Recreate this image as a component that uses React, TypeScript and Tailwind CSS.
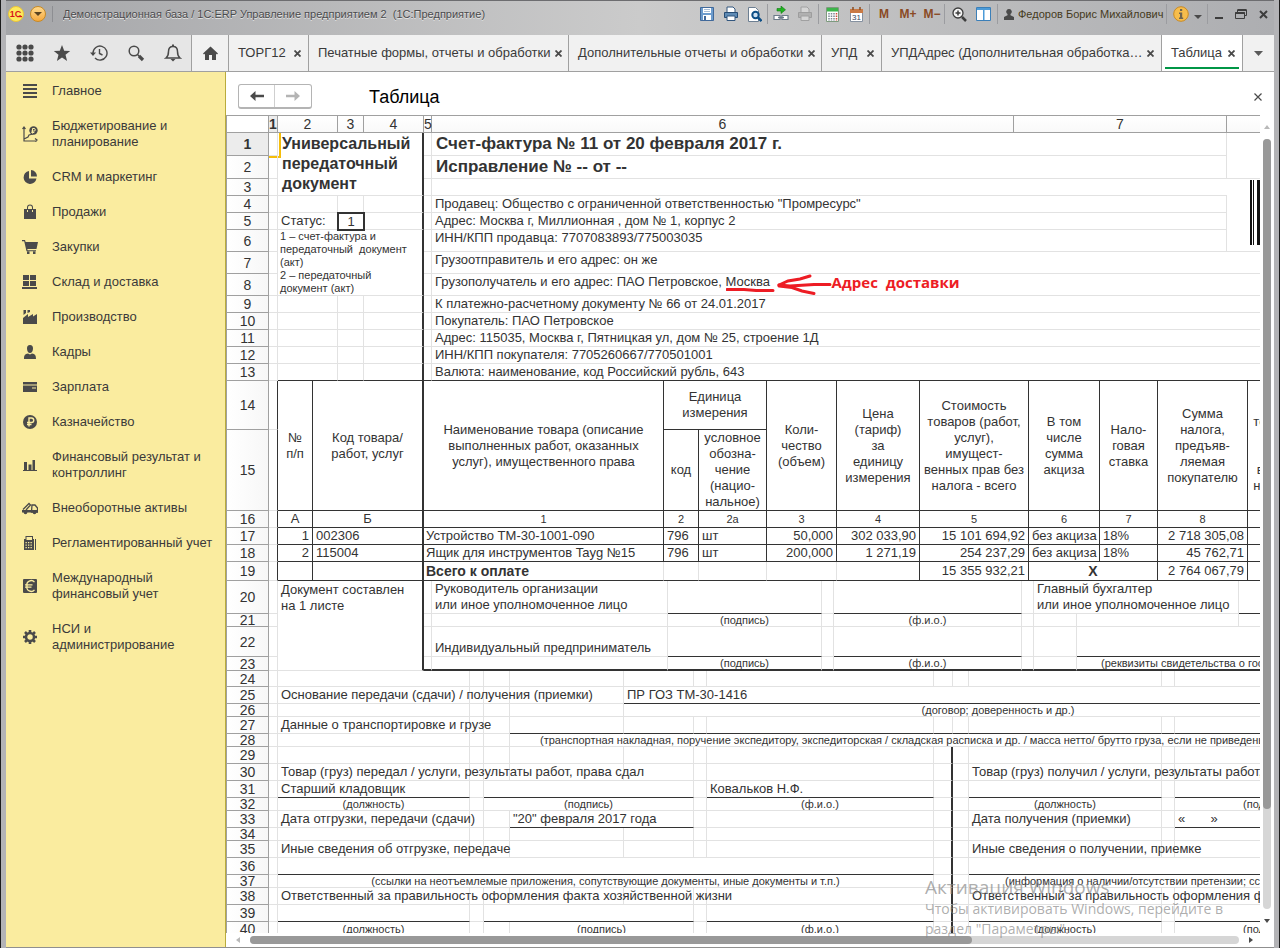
import type { ReactNode } from "react";
import { clsx } from "clsx";

const RIGHT = {
  none: "",
  light: "border-r border-r-[#e2e2e2]",
  dark: "border-r border-r-[#333333]",
  thick: "border-r-2 border-r-[#333333]",
};

const BOTTOM = {
  none: "",
  light: "border-b border-b-[#e2e2e2]",
  dark: "border-b border-b-[#333333]",
  thick: "border-b-2 border-b-[#333333]",
};

type CellProps = {
  span?: number;
  rows?: number;
  r?: keyof typeof RIGHT;
  b?: keyof typeof BOTTOM;
  className?: string;
  children?: ReactNode;
};

const Cell = ({ span, rows, r = "light", b = "light", className, children }: CellProps) => (
  <td colSpan={span} rowSpan={rows} className={clsx(RIGHT[r], BOTTOM[b], className)}>
    {children}
  </td>
);

const Blank = ({ count, ...rest }: { count: number } & CellProps) => (
  <>
    {Array.from({ length: count }, (_, i) => (
      <Cell key={i} {...rest} />
    ))}
  </>
);

type RowProps = { n: number; h: string; edge?: keyof typeof RIGHT; children: ReactNode };

const Row = ({ n, h, edge = "light", children }: RowProps) => (
  <tr className={h}>
    <th
      scope="row"
      className={clsx(
        "border-x border-b border-[#a0a0a0] text-center text-sm leading-3",
        n === 1 ? "bg-[#ececec] font-bold" : "bg-linear-to-r from-white to-[#f7f7f7] font-normal"
      )}
    >
      {n}
    </th>
    <td className={clsx("relative", RIGHT[edge], BOTTOM.light)}>
      {n === 1 && (
        <span className="absolute top-0 left-0 h-[25px] w-3 border-r-2 border-b-2 border-[#f5bd0a]" />
      )}
    </td>
    {children}
  </tr>
);

const Section = ({ label, cols, head, children }: { label: string; cols: string[]; head?: ReactNode; children: ReactNode }) => (
  <table aria-label={label} className="w-full min-w-[1146px] table-fixed border-separate border-spacing-0">
    <colgroup>
      {cols.map((w, i) => (
        <col key={i} className={w} />
      ))}
      <col />
    </colgroup>
    {head}
    <tbody>{children}</tbody>
  </table>
);

const SMALL = "text-center text-[11px] leading-3 whitespace-nowrap";
const TEXT = "pl-[3px] whitespace-nowrap";
const HEAD = "text-center";
const NUM = "pr-[3px] text-right whitespace-nowrap";

const COL_HEADS = ["1", "2", "3", "4", "5", "6", "7", ""];

const INVOICE_LINES = [
  { n: 9, text: "К платежно-расчетному документу № 66 от 24.01.2017" },
  { n: 10, text: "Покупатель: ПАО Петровское" },
  { n: 11, text: "Адрес: 115035, Москва г, Пятницкая ул, дом № 25, строение 1Д" },
  { n: 12, text: "ИНН/КПП покупателя: 7705260667/770501001" },
  { n: 13, text: "Валюта: наименование, код Российский рубль, 643" },
];

const GOODS = [
  { n: 17, no: "1", code: "002306", name: "Устройство ТМ-30-1001-090", qty: "50,000", price: "302 033,90", sum: "15 101 694,92", tax: "2 718 305,08" },
  { n: 18, no: "2", code: "115004", name: "Ящик для инструментов Tayg №15", qty: "200,000", price: "1 271,19", sum: "254 237,29", tax: "45 762,71" },
];

const InvoiceHeader = () => (
  <Section
    label="Реквизиты счета-фактуры"
    cols={["w-[43px]", "w-[9px]", "w-[60px]", "w-[26px]", "w-[60px]", "w-[8px]", "w-[582px]", "w-[213px]"]}
    head={
      <thead>
        <tr className="h-[17px]">
          <th className="border-x border-b border-[#a0a0a0]" />
          {COL_HEADS.map((c, i) => (
            <th
              key={i}
              scope="col"
              className={clsx(
                "border-r border-b border-[#a0a0a0] text-sm leading-4",
                i === 0 ? "bg-[#ececec] font-bold" : "bg-linear-to-b from-white to-[#f9f9f9] font-normal"
              )}
            >
              {c}
            </th>
          ))}
        </tr>
      </thead>
    }
  >
    <Row n={1} h="h-[23px]">
      <Cell span={3} rows={3} r="thick" className="pt-px pl-1 align-top text-base leading-5 font-bold">
        Универсальный передаточный документ
      </Cell>
      <Cell />
      <Cell span={2} className="pl-1 text-[17px] leading-5 font-bold">Счет-фактура № 11 от 20 февраля 2017 г.</Cell>
      <Cell rows={2} r="none" />
    </Row>
    <Row n={2} h="h-[23px]">
      <Cell />
      <Cell span={2} className="pl-1 text-[17px] leading-5 font-bold">Исправление № -- от --</Cell>
    </Row>
    <Row n={3} h="h-[17px]">
      <Cell />
      <Cell span={2} r="none" />
      <Cell rows={4} r="none" className="pl-[22px] align-top">
        <svg width="36" height="65" className="mt-px block" aria-label="Штрихкод" role="img">
          <path d="M1 0h2v65h-2zM4 0h1v65h-1zM8 0h4v65h-4zM14 0h1v65h-1zM17 0h3v65h-3zM23 0h1v65h-1zM26 0h2v65h-2zM31 0h3v65h-3z" fill="#111" />
        </svg>
      </Cell>
    </Row>
    <Row n={4} h="h-[17px]">
      <Blank count={2} />
      <Cell r="thick" />
      <Cell />
      <Cell span={2} className={TEXT}>Продавец: Общество с ограниченной ответственностью "Промресурс"</Cell>
    </Row>
    <Row n={5} h="h-[17px]">
      <Cell className={TEXT}>Статус:</Cell>
      <td className="text-center outline-2 -outline-offset-1 outline-[#333333]">1</td>
      <Cell r="thick" />
      <Cell />
      <Cell span={2} className={TEXT}>Адрес: Москва г, Миллионная , дом № 1, корпус 2</Cell>
    </Row>
    <Row n={6} h="h-[22px]">
      <Cell span={3} rows={3} r="thick" className="pl-0.5 align-top text-[11px] leading-[13px]">
        1 – счет-фактура и<br />
        передаточный&nbsp; документ<br />
        (акт)<br />
        2 – передаточный<br />
        документ (акт)
      </Cell>
      <Cell />
      <Cell span={2} className={clsx(TEXT, "align-top")}>ИНН/КПП продавца: 7707083893/775003035</Cell>
    </Row>
    <Row n={7} h="h-[22px]">
      <Cell />
      <Cell span={3} r="none" className={clsx(TEXT, "align-top")}>Грузоотправитель и его адрес: он же</Cell>
    </Row>
    <Row n={8} h="h-[22px]">
      <Cell />
      <Cell span={3} r="none" className={clsx(TEXT, "align-top")}>
        Грузополучатель и его адрес: ПАО Петровское,{" "}
        <span className="relative">
          Москва
          <span className="absolute -top-0.5 left-0 flex items-center">
            <svg width="106" height="24" viewBox="0 0 106 24" fill="none" stroke="#ed1c24" strokeWidth="3" strokeLinecap="round" className="shrink-0">
              <path d="M1 17.500 18 17.500 30 18.500 47 18.500" />
              <path d="M53 13 64 14 88 12.500 104 12.500" />
              <path d="M53 13 62 9 74 7 84 4" />
              <path d="M53 14 66 15.500 76 19 88 21.500" />
            </svg>
            <strong className="mb-1 font-['Open_Sans',sans-serif] text-[15px] leading-5 font-bold text-[#ed1c24]">
              Адрес&nbsp; доставки
            </strong>
          </span>
        </span>
      </Cell>
    </Row>
    {INVOICE_LINES.map(({ n, text }) => {
      const b = n === 13 ? "dark" : "light";
      return (
        <Row key={n} n={n} h="h-[17px]">
          <Blank count={2} b={b} />
          <Cell r="thick" b={b} />
          <Cell b={b} />
          <Cell span={3} r="none" b={b} className={TEXT}>{text}</Cell>
        </Row>
      );
    })}
  </Section>
);

const GoodsTable = () => (
  <Section
    label="Товары"
    cols={["w-[43px]", "w-[9px]", "w-[35px]", "w-[111px]", "w-[240px]", "w-[35px]", "w-[68px]", "w-[70px]", "w-[83px]", "w-[109px]", "w-[71px]", "w-[58px]", "w-[90px]", "w-[105px]"]}
  >
    <Row n={14} h="h-[49px]" edge="dark">
      <Cell rows={2} r="dark" b="dark" className={HEAD}>№<br />п/п</Cell>
      <Cell rows={2} r="thick" b="dark" className={HEAD}>Код товара/<br />работ, услуг</Cell>
      <Cell rows={2} r="dark" b="dark" className={HEAD}>
        Наименование товара (описание<br />выполненных работ, оказанных<br />услуг), имущественного права
      </Cell>
      <Cell span={2} r="dark" b="dark" className={HEAD}>Единица<br />измерения</Cell>
      <Cell rows={2} r="dark" b="dark" className={HEAD}>Коли-<br />чество<br />(объем)</Cell>
      <Cell rows={2} r="dark" b="dark" className={HEAD}>Цена<br />(тариф)<br />за<br />единицу<br />измерения</Cell>
      <Cell rows={2} r="dark" b="dark" className={clsx(HEAD, "whitespace-nowrap")}>
        Стоимость<br />товаров (работ,<br />услуг),<br />имущест-<br />венных прав без<br />налога - всего
      </Cell>
      <Cell rows={2} r="dark" b="dark" className={HEAD}>В том<br />числе<br />сумма<br />акциза</Cell>
      <Cell rows={2} r="dark" b="dark" className={HEAD}>Нало-<br />говая<br />ставка</Cell>
      <Cell rows={2} r="dark" b="dark" className={HEAD}>Сумма<br />налога,<br />предъяв-<br />ляемая<br />покупателю</Cell>
      <Cell rows={2} r="dark" b="dark" className={clsx(HEAD, "whitespace-nowrap")}>
        Стоимость<br />товаров (работ,<br />услуг),<br />имущест-<br />венных прав с<br />налогом - всего
      </Cell>
      <Cell rows={2} r="none" b="dark" />
    </Row>
    <Row n={15} h="h-[81px]" edge="dark">
      <Cell r="dark" b="dark" className={HEAD}>код</Cell>
      <Cell r="dark" b="dark" className={clsx(HEAD, "whitespace-nowrap")}>
        условное<br />обозна-<br />чение<br />(нацио-<br />нальное)
      </Cell>
    </Row>
    <Row n={16} h="h-[17px]" edge="dark">
      <Cell r="dark" b="dark" className="text-center">А</Cell>
      <Cell r="thick" b="dark" className="text-center">Б</Cell>
      {["1", "2", "2а", "3", "4", "5", "6", "7", "8", "9", ""].map((c, i) => (
        <Cell key={i} r="dark" b="dark" className="text-center text-[11px]">{c}</Cell>
      ))}
    </Row>
    {GOODS.map((g) => (
      <Row key={g.n} n={g.n} h="h-[17px]" edge="dark">
        <Cell r="dark" b="dark" className={NUM}>{g.no}</Cell>
        <Cell r="thick" b="dark" className={TEXT}>{g.code}</Cell>
        <Cell r="dark" b="dark" className="pl-0.5 whitespace-nowrap">{g.name}</Cell>
        <Cell r="dark" b="dark" className={TEXT}>796</Cell>
        <Cell r="dark" b="dark" className={TEXT}>шт</Cell>
        <Cell r="dark" b="dark" className={NUM}>{g.qty}</Cell>
        <Cell r="dark" b="dark" className={NUM}>{g.price}</Cell>
        <Cell r="dark" b="dark" className={NUM}>{g.sum}</Cell>
        <Cell r="dark" b="dark" className={TEXT}>без акциза</Cell>
        <Cell r="dark" b="dark" className={TEXT}>18%</Cell>
        <Cell r="dark" b="dark" className={NUM}>{g.tax}</Cell>
        <Blank count={2} r="dark" b="dark" />
      </Row>
    ))}
    <Row n={19} h="h-[19px]" edge="dark">
      <Cell r="dark" b="dark" />
      <Cell r="thick" b="dark" />
      <Cell b="dark" className="pl-0.5 text-sm leading-4 font-bold whitespace-nowrap">Всего к оплате</Cell>
      <Blank count={3} b="dark" />
      <Cell r="dark" b="dark" />
      <Cell r="dark" b="dark" className={NUM}>15 355 932,21</Cell>
      <Cell span={2} r="dark" b="dark" className="text-center text-sm leading-4 font-bold">Х</Cell>
      <Cell r="dark" b="dark" className={NUM}>2 764 067,79</Cell>
      <Blank count={2} r="dark" b="dark" />
    </Row>
  </Section>
);

const Signatures = () => (
  <Section
    label="Подписи"
    cols={["w-[43px]", "w-[9px]", "w-[146px]", "w-[8px]", "w-[236px]", "w-[154px]", "w-[12px]", "w-[188px]", "w-[12px]", "w-[43px]", "w-[162px]"]}
  >
    <Row n={20} h="h-[33px]">
      <Cell rows={4} r="thick" className={clsx(TEXT, "pt-px align-top")}>Документ составлен<br />на 1 листе</Cell>
      <Cell />
      <Cell className={TEXT}>Руководитель организации<br />или иное уполномоченное лицо</Cell>
      <Cell b="dark" />
      <Cell />
      <Cell b="dark" />
      <Cell />
      <Cell span={2} className={TEXT}>Главный бухгалтер<br />или иное уполномоченное лицо</Cell>
      <Cell r="none" b="dark" />
    </Row>
    <Row n={21} h="h-[13px]">
      <Blank count={2} />
      <Cell className={SMALL}>(подпись)</Cell>
      <Cell />
      <Cell className={SMALL}>(ф.и.о.)</Cell>
      <Blank count={3} />
      <Cell r="none" />
    </Row>
    <Row n={22} h="h-[30px]">
      <Cell />
      <Cell className={clsx(TEXT, "align-bottom")}>Индивидуальный предприниматель</Cell>
      <Cell b="dark" />
      <Cell />
      <Cell b="dark" />
      <Blank count={2} />
      <Cell span={2} r="none" b="dark" />
    </Row>
    <Row n={23} h="h-[14px]">
      <Blank count={2} b="thick" />
      <Cell b="thick" className={SMALL}>(подпись)</Cell>
      <Cell b="thick" />
      <Cell b="thick" className={SMALL}>(ф.и.о.)</Cell>
      <Blank count={2} b="thick" />
      <Cell span={2} r="none" b="thick" className="pl-6 text-[11px] leading-3 whitespace-nowrap">
        (реквизиты свидетельства о государственной
      </Cell>
    </Row>
  </Section>
);

/* grid cells shared by the rows that carry no signature lines */
const RightHalf = ({ text }: { text?: string }) => (
  <>
    <Cell />
    <Cell r="thick" />
    <Cell />
    <Cell className={TEXT}>{text}</Cell>
    <Cell />
    <Cell r="none" />
  </>
);

const Transfer = () => (
  <Section
    label="Передача и получение"
    cols={["w-[43px]", "w-[9px]", "w-[192px]", "w-[14px]", "w-[26px]", "w-[114px]", "w-[70px]", "w-[13px]", "w-[227px]", "w-[19px]", "w-[16px]", "w-[193px]", "w-[13px]"]}
  >
    <Row n={24} h="h-[16px]">
      <Blank count={11} />
      <Cell r="none" />
    </Row>
    <Row n={25} h="h-[17px]">
      <Cell className={TEXT}>Основание передачи (сдачи) / получения (приемки)</Cell>
      <Blank count={3} />
      <Cell span={8} r="none" b="dark" className={TEXT}>ПР ГОЗ ТМ-30-1416</Cell>
    </Row>
    <Row n={26} h="h-[13px]">
      <Blank count={4} />
      <Cell span={8} r="none" className={SMALL}>(договор; доверенность и др.)</Cell>
    </Row>
    <Row n={27} h="h-[17px]">
      <Cell className={TEXT}>Данные о транспортировке и грузе</Cell>
      <Blank count={2} />
      <Blank count={8} b="dark" />
      <Cell r="none" b="dark" />
    </Row>
    <Row n={28} h="h-[13px]">
      <Blank count={3} />
      <Cell span={9} r="none" className="pl-[30px] text-[11px] leading-3 whitespace-nowrap">
        (транспортная накладная, поручение экспедитору, экспедиторская / складская расписка и др. / масса нетто/ брутто груза, если не приведены ссылки
      </Cell>
    </Row>
    <Row n={29} h="h-[17px]">
      <Blank count={6} />
      <RightHalf />
    </Row>
    <Row n={30} h="h-[17px]">
      <Cell className={TEXT}>Товар (груз) передал / услуги, результаты работ, права сдал</Cell>
      <Blank count={5} />
      <RightHalf text="Товар (груз) получил / услуги, результаты работ, права получил" />
    </Row>
    <Row n={31} h="h-[17px]">
      <Cell b="dark" className={TEXT}>Старший кладовщик</Cell>
      <Cell />
      <Cell span={3} b="dark" />
      <Cell />
      <Cell b="dark" className={TEXT}>Ковальков Н.Ф.</Cell>
      <Cell r="thick" />
      <Cell />
      <Cell b="dark" />
      <Cell />
      <Cell r="none" b="dark" />
    </Row>
    <Row n={32} h="h-[13px]">
      <Cell className={SMALL}>(должность)</Cell>
      <Cell />
      <Cell span={3} className={SMALL}>(подпись)</Cell>
      <Cell />
      <Cell className={SMALL}>(ф.и.о.)</Cell>
      <Cell r="thick" />
      <Cell />
      <Cell className={SMALL}>(должность)</Cell>
      <Cell />
      <Cell r="none" className={clsx(SMALL, "pr-3")}>(подпись)</Cell>
    </Row>
    <Row n={33} h="h-[17px]">
      <Cell className={TEXT}>Дата отгрузки, передачи (сдачи)</Cell>
      <Blank count={2} />
      <Cell span={2} b="dark" className={TEXT}>"20" февраля 2017 года</Cell>
      <Blank count={2} />
      <Cell r="thick" />
      <Cell />
      <Cell className={TEXT}>Дата получения (приемки)</Cell>
      <Cell />
      <Cell r="none" b="dark" className={TEXT}>«&nbsp;&nbsp;&nbsp;&nbsp;&nbsp;&nbsp; »</Cell>
    </Row>
    <Row n={34} h="h-[13px]">
      <Blank count={6} />
      <RightHalf />
    </Row>
    <Row n={35} h="h-[17px]">
      <Cell className={TEXT}>Иные сведения об отгрузке, передаче</Cell>
      <Blank count={5} />
      <RightHalf text="Иные сведения о получении, приемке" />
    </Row>
    <Row n={36} h="h-[17px]">
      <Cell span={7} b="dark" />
      <Cell r="thick" />
      <Cell />
      <Cell span={3} r="none" b="dark" />
    </Row>
    <Row n={37} h="h-[13px]">
      <Cell span={7} className={SMALL}>(ссылки на неотъемлемые приложения, сопутствующие документы, иные документы и т.п.)</Cell>
      <Cell r="thick" />
      <Cell />
      <Cell span={3} r="none" className="pl-9 text-[11px] leading-3 whitespace-nowrap">
        (информация о наличии/отсутствии претензии; ссылки
      </Cell>
    </Row>
    <Row n={38} h="h-[17px]">
      <Cell className={TEXT}>Ответственный за правильность оформления факта хозяйственной жизни</Cell>
      <Blank count={5} />
      <RightHalf text="Ответственный за правильность оформления факта" />
    </Row>
    <Row n={39} h="h-[17px]">
      <Cell b="dark" />
      <Cell />
      <Cell span={3} b="dark" />
      <Cell />
      <Cell b="dark" />
      <Cell r="thick" />
      <Cell />
      <Cell b="dark" />
      <Cell />
      <Cell r="none" b="dark" />
    </Row>
    <Row n={40} h="h-[15px]">
      <Cell className={SMALL}>(должность)</Cell>
      <Blank count={2} />
      <Cell span={2} className={SMALL}>(подпись)</Cell>
      <Cell />
      <Cell className={SMALL}>(ф.и.о.)</Cell>
      <Cell r="thick" />
      <Cell />
      <Cell className={SMALL}>(должность)</Cell>
      <Cell />
      <Cell r="none" className={clsx(SMALL, "pr-3")}>(подпись)</Cell>
    </Row>
  </Section>
);

const MENU: { label: ReactNode; icon: ReactNode }[] = [
  { label: "Главное", icon: <path d="M1 1h14v2H1zM1 5h14v2H1zM1 9h14v2H1zM1 13h14v2H1z" /> },
  {
    label: <>Бюджетирование и<br />планирование</>,
    icon: (
      <>
        <path d="M2 1v14h13M0.500 3 2 1l1.500 2M13 12.500l2 1.500-2 1.500M2 13l4-2 1-2 4-1" fill="none" stroke="currentColor" strokeWidth="1.2" />
        <circle cx="11.500" cy="4.500" r="4.200" />
        <path d="M10.500 7.500v-5h1.500a1.300 1.300 0 0 1 0 2.600h-2.700M9.300 6.500h3" fill="none" stroke="#fbeda1" />
      </>
    ),
  },
  { label: "CRM и маркетинг", icon: <path d="M7 2a6.500 6.500 0 1 0 7.500 7.500H7zM9 1v6.500h6A6.500 6.500 0 0 0 9 1z" /> },
  { label: "Продажи", icon: <path d="M2 5h3V3.500a3 3 0 0 1 6 0V5h3v10H2zM6 5h4V3.500a2 2 0 0 0-4 0zM5 6v2h1V6zM10 6v2h1V6z" fillRule="evenodd" /> },
  { label: "Закупки", icon: <path d="M0 1h3l.6 2H16l-1.500 7H5.300l.3 1.200H14v1H4.500L2.200 2.200H0zM5 12.500h2.500V15H5zM11 12.500h2.500V15H11z" /> },
  { label: "Склад и доставка", icon: <path d="M1 1h6v5H1zM8 1h6v5H8zM1 7h6v5H1zM8 7h6v5H8zM0 13h15v2H0z" /> },
  { label: "Производство", icon: <path d="M1 15V9l5-4v3l5-3v2.500L15 5v10zM1.500 1H4v3L1.500 6zM5.500 1H8v2L5.500 4z" /> },
  { label: "Кадры", icon: <path d="M8 1c2.200 0 3 1.500 3 3.500C11 7 9.800 9 8 9S5 7 5 4.500C5 2.500 5.800 1 8 1zM2 15c0-4 1-5 4-5.500l2 1 2-1c3 .5 4 1.500 4 5.500z" /> },
  { label: "Зарплата", icon: <path d="M1 3h14v2.500H1zM1 6.500h14V13H1zM10 8.500v1h4v-1z" fillRule="evenodd" /> },
  {
    label: "Казначейство",
    icon: (
      <>
        <circle cx="8" cy="8" r="7" />
        <path d="M7 12.500V4h2.500a2.200 2.200 0 0 1 0 4.500H5M5 10.500h4.500" fill="none" stroke="#fbeda1" strokeWidth="1.4" />
      </>
    ),
  },
  { label: <>Финансовый результат и<br />контроллинг</>, icon: <path d="M2 5h3v8H2zM6.500 7.500h3V13h-3zM10.500 3h2.500v10h-2.500zM1 13h14v1H1z" /> },
  {
    label: "Внеоборотные активы",
    icon: (
      <>
        <path d="M1 9.500 7 3.500l1.500 1.500L4 10M10 5h3l2.500 3v4H9.500z" fill="none" stroke="currentColor" strokeWidth="1.3" />
        <path d="M0 10h16v2.500H0z" />
        <circle cx="3.500" cy="12.500" r="1.800" />
        <circle cx="12.500" cy="12.500" r="1.800" />
      </>
    ),
  },
  {
    label: "Регламентированный учет",
    icon: (
      <path
        d="M3.500 1H11v3h1v11H2V4h1.500zM4.500 2v3H10V2zM3.500 7v1.300h1.300V7zM6 7v1.300h1.300V7zM8.500 7v1.300h1.300V7zM3.500 9.500v1.300h1.300V9.500zM6 9.500v1.300h1.300V9.500zM8.500 9.500v1.300h1.300V9.500zM3.500 12v1.300h1.300V12zM6 12v1.300h1.300V12zM8.500 12v1.300h1.300V12zM13 4h1v11h-1z"
        fillRule="evenodd"
      />
    ),
  },
  {
    label: <>Международный<br />финансовый учет</>,
    icon: (
      <>
        <rect x="1" y="1" width="14" height="14" rx="1" />
        <path d="M12.500 4.200A4.300 4.300 0 0 0 5 8a4.300 4.300 0 0 0 7.500 3.800M3 6.800h7.500M3 9.200h6.500" fill="none" stroke="#fbeda1" strokeWidth="1.300" />
      </>
    ),
  },
  {
    label: <>НСИ и<br />администрирование</>,
    icon: (
      <>
        <circle cx="8" cy="8" r="4" fill="none" stroke="currentColor" strokeWidth="2.500" />
        <path d="M8 1v2.500M8 12.500V15M1 8h2.500M12.500 8H15M3 3l1.800 1.800M11.200 11.200 13 13M3 13l1.800-1.800M11.200 4.800 13 3" stroke="currentColor" strokeWidth="2.600" />
      </>
    ),
  },
];

const Sidebar = () => (
  <nav className="flex w-[220px] shrink-0 flex-col gap-[19px] border-r border-[#b9ab3c] bg-[#faec9f] pt-[11px] pl-4 text-[13px] leading-4">
    {MENU.map(({ label, icon }, i) => (
      <a key={i} href="#" className="flex items-center gap-[14px] text-[#3a3a3a]">
        <svg width="16" height="16" viewBox="0 0 16 16" fill="currentColor" className="shrink-0 text-[#4a4a4a]">
          {icon}
        </svg>
        <span className="whitespace-nowrap">{label}</span>
      </a>
    ))}
  </nav>
);

const Group = ({ children, className }: { children: ReactNode; className?: string }) => (
  <div className={clsx("flex h-5 items-center border-l border-[#9b9ca0]", className)}>{children}</div>
);

const BarButton = ({ label, children, className }: { label: string; children: ReactNode; className?: string }) => (
  <button type="button" aria-label={label} className={clsx("flex h-5 items-center justify-center", className ?? "w-6")}>
    {children}
  </button>
);

const Printer = () => (
  <svg width="16" height="16" viewBox="0 0 16 16">
    <path d="M4 1h6l2 2v4H4z" fill="#fff" stroke="#33577f" />
    <path d="M1.500 6.500h13v5h-13z" fill="#5f8bb5" stroke="#274c74" />
    <path d="M4 10h8v4.500H4z" fill="#fff" stroke="#33577f" />
  </svg>
);

const TitleBar = () => (
  <header className="flex h-[35px] items-center border-t border-[#6d6d70] bg-linear-to-r from-[#a5a6a9] via-[#cbcbcb] to-[#adaeb1] pb-2 pl-0.5">
    <svg width="16" height="16" viewBox="0 0 16 16" className="shrink-0">
      <circle cx="8" cy="8" r="7.500" fill="#fdea5c" stroke="#e9c43a" />
      <text x="7.500" y="11" textAnchor="middle" fontSize="9" fontWeight="bold" fontFamily="Liberation Sans, sans-serif" fill="#d8131b">1С</text>
      <path d="M9 10.600h5" stroke="#d8131b" strokeWidth="1.200" />
    </svg>
    <button type="button" aria-label="Главное меню" className="ml-1.5 flex size-4 items-center justify-center rounded-full border border-[#c98a24] bg-linear-to-b from-[#ffd98a] to-[#f5a93c]">
      <svg width="8" height="4" viewBox="0 0 8 4"><path d="M0 0h8L4 4z" fill="#5a4320" /></svg>
    </button>
    <div className="ml-1.5 h-4 border-l border-[#8d8e92]" />
    <div className="ml-2.5 flex-1 truncate text-[11px] text-[#4b4b4d] [text-shadow:0_1px_0_#e4e4e4]">
      Демонстрационная база / 1С:ERP Управление предприятием 2 &nbsp;(1С:Предприятие)
    </div>

    <div className="flex">
      <BarButton label="Сохранить">
        <svg width="14" height="14" viewBox="0 0 14 14">
          <path d="M.5.500h13v13H.5z" fill="#6d9ccd" stroke="#41699a" />
          <path d="M3 1h8v5H3zM3 8h8v5H3z" fill="#fff" />
          <path d="M4 2.500h6M4 4.500h6" stroke="#a9bfd8" />
          <path d="M4 9h2v4H4z" fill="#41699a" />
        </svg>
      </BarButton>
      <BarButton label="Печать"><Printer /></BarButton>
      <BarButton label="Просмотр">
        <svg width="14" height="15" viewBox="0 0 14 15">
          <path d="M.5.500h7l3 3v11H.5z" fill="#fff" stroke="#6d7f92" />
          <circle cx="7.500" cy="8" r="3.200" fill="#cfe2f2" stroke="#0d4f86" strokeWidth="2" />
          <path d="m10 10.500 3.500 3.500" stroke="#0d4f86" strokeWidth="2.500" />
        </svg>
      </BarButton>
    </div>
    <Group className="px-px">
      <BarButton label="Получить ссылку">
        <svg width="16" height="16" viewBox="0 0 16 16">
          <path d="M4 2.500h4V0l4.500 3.800L8 7.500V5H4z" fill="#22b422" stroke="#0e7a12" strokeWidth=".6" />
          <path d="M1 9.500h6v4H1zM9 9.500h6v4H9z" fill="#fff" stroke="#6c7b8a" strokeWidth="1.200" />
          <path d="M5 11.500h6" stroke="#6c7b8a" strokeWidth="1.500" />
        </svg>
      </BarButton>
      <BarButton label="Перейти по ссылке">
        <span className="opacity-30 grayscale"><Printer /></span>
      </BarButton>
    </Group>
    <Group className="px-px">
      <BarButton label="Калькулятор">
        <svg width="13" height="15" viewBox="0 0 13 15">
          <path d="M.5.500h12v14H.5z" fill="#fff" stroke="#7e9a7e" />
          <path d="M1 1h11v3.500H1z" fill="#3cb54a" />
          <path d="M3 6v8M5.500 6v8M8 6v8" stroke="#7b8894" strokeDasharray="1.500 1" strokeWidth="1.500" />
          <path d="M10.500 6v8" stroke="#d04a3a" strokeDasharray="1.500 1" strokeWidth="1.500" />
        </svg>
      </BarButton>
      <BarButton label="Календарь">
        <svg width="13" height="15" viewBox="0 0 13 15">
          <path d="M.5 2.500h12v12H.5z" fill="#fff" stroke="#8591a0" />
          <path d="M0 2h13v4H0z" fill="#c97a45" />
          <path d="M3 0v3M10 0v3" stroke="#8b4d22" strokeWidth="1.500" />
          <text x="6.500" y="13" textAnchor="middle" fontSize="8" fontFamily="Liberation Sans, sans-serif" fill="#33475e">31</text>
        </svg>
      </BarButton>
    </Group>
    <Group className="pl-0.5 text-[12px] font-bold text-[#8a4a25]">
      <BarButton label="M">M</BarButton>
      <BarButton label="M+">M+</BarButton>
      <BarButton label="M−">M−</BarButton>
    </Group>
    <Group className="px-0.5">
      <BarButton label="Масштаб">
        <svg width="15" height="15" viewBox="0 0 15 15" fill="none" stroke="#3d3d3d">
          <circle cx="6" cy="6" r="5" fill="#f4f4f4" strokeWidth="1.300" />
          <path d="M3.500 6h5M6 3.500v5" strokeWidth="1.500" />
          <path d="m10 10 4 4" strokeWidth="2.500" />
        </svg>
      </BarButton>
      <BarButton label="Панели">
        <svg width="15" height="14" viewBox="0 0 15 14">
          <path d="M.5.500h14v13H.5z" fill="#fff" stroke="#3b7fb8" />
          <path d="M1 1h13v2H1zM7 1h1.500v12H7z" fill="#4c9bd8" />
        </svg>
      </BarButton>
    </Group>
    <Group className="w-[169px] gap-1 pl-1.5 text-[11px] text-[#453a1c]">
      <svg width="10" height="11" viewBox="0 0 10 11" fill="#4a4a4a" className="shrink-0">
        <path d="M5 0a2.700 2.700 0 0 1 1.500 5v1.200L10 8v3H0V8l3.500-1.800V5A2.700 2.700 0 0 1 5 0z" />
      </svg>
      <span className="whitespace-nowrap">Федоров Борис Михайлович</span>
    </Group>
    <Group className="w-[41px] gap-1 pl-1.5">
      <BarButton label="О программе" className="w-4">
        <svg width="16" height="16" viewBox="0 0 16 16">
          <circle cx="8" cy="8" r="7.300" fill="#f6bd4c" stroke="#c98a24" />
          <path d="M7 3h2.200v2H7zM6 6.500h3.200v5h1V13H6v-1.500h1V8H6z" fill="#6f6550" />
        </svg>
      </BarButton>
      <BarButton label="Ещё" className="w-2.5">
        <svg width="8" height="4" viewBox="0 0 8 4" className="mt-1.5"><path d="M0 0h8L4 4z" fill="#4a4a4a" /></svg>
      </BarButton>
    </Group>
    <Group className="w-[67px]">
      <BarButton label="Свернуть" className="w-[22px]">
        <svg width="8" height="10" viewBox="0 0 8 10"><path d="M0 8h8v2H0z" fill="#3d3d3d" /></svg>
      </BarButton>
      <BarButton label="Восстановить" className="w-[22px]">
        <svg width="12" height="10" viewBox="0 0 12 10" fill="none" stroke="#3d3d3d">
          <path d="M2.500 3V1h9v5.500h-2M.5 3.500h9v6h-9z" />
          <path d="M2.500 1h9M.5 4h9" strokeWidth="2" />
        </svg>
      </BarButton>
      <BarButton label="Закрыть" className="w-[22px]">
        <svg width="9" height="9" viewBox="0 0 9 9" stroke="#3d3d3d" strokeWidth="2"><path d="m1 1 7 7M8 1 1 8" /></svg>
      </BarButton>
    </Group>
  </header>
);

const TABS = [
  { label: "ТОРГ12", width: "w-[80px]" },
  { label: "Печатные формы, отчеты и обработки", width: "w-[260px]" },
  { label: "Дополнительные отчеты и обработки", width: "w-[253px]" },
  { label: "УПД", width: "w-[60px]" },
  { label: "УПДАдрес (Дополнительная обработка…", width: "w-[280px]" },
  { label: "Таблица", width: "w-[81px]", active: true },
];

const TabBar = () => (
  <div className="flex h-[37px] border-b border-[#a0a0a0] bg-[#f1f1f1] text-[#3a3a3a]">
    <div className="flex w-[186px] shrink-0 items-center border-r border-[#a0a0a0] bg-[#e6e6e6] text-[#4a4a4a]">
      <BarButton label="Меню функций" className="w-[37px]">
        <svg width="18" height="18" viewBox="0 0 18 18" fill="currentColor">
          {[3, 9, 15].map((y) => [3, 9, 15].map((x) => <circle key={`${x}-${y}`} cx={x} cy={y} r="2.600" />))}
        </svg>
      </BarButton>
      <BarButton label="Избранное" className="w-[37px]">
        <svg width="18" height="18" viewBox="0 0 18 18" fill="currentColor"><path d="m9 1 2.200 5.700 6 .3-4.700 3.800L14.100 17 9 13.600 3.900 17l1.600-6.200L.8 7l6-.3z" /></svg>
      </BarButton>
      <BarButton label="История" className="w-[37px]">
        <svg width="18" height="18" viewBox="0 0 18 18" fill="none" stroke="currentColor" strokeWidth="1.400">
          <path d="M3 9a7 7 0 1 1 2 5" />
          <path d="M9.500 5v4.500l3 1.500" />
          <path d="M0 8.500h6L3 12z" fill="currentColor" stroke="none" />
        </svg>
      </BarButton>
      <BarButton label="Поиск" className="w-[37px]">
        <svg width="18" height="18" viewBox="0 0 18 18" fill="none" stroke="currentColor">
          <circle cx="7" cy="7" r="4.800" strokeWidth="1.500" />
          <path d="m10.500 10.500 2 2" strokeWidth="1.500" />
          <path d="m12 12 4 4" strokeWidth="3.200" />
        </svg>
      </BarButton>
      <BarButton label="Уведомления" className="w-[37px]">
        <svg width="18" height="18" viewBox="0 0 18 18" fill="none" stroke="currentColor" strokeWidth="1.500">
          <path d="M2 14c2-1.500 2.500-3 2.500-6.500C4.500 4.500 6 2.500 9 2.500s4.500 2 4.500 5c0 3.500.5 5 2.500 6.500z" />
          <path d="M9 2.500V.500" strokeWidth="2" />
          <path d="M6.500 15h5L9 17.500z" fill="currentColor" stroke="none" />
        </svg>
      </BarButton>
    </div>
    <button type="button" aria-label="Начальная страница" className="flex w-[37px] shrink-0 items-center justify-center border-r border-[#a0a0a0] text-[#4a4a4a]">
      <svg width="15" height="14" viewBox="0 0 15 14" fill="currentColor"><path d="M7.500.500 15 7.500 14 8.500l-1-.8V14H9V9H6v5H2V7.700l-1 .8-1-1z" /></svg>
    </button>
    {TABS.map((tab) => (
      <div key={tab.label} className={clsx("flex shrink-0 border-r border-[#a0a0a0] px-[3px] pt-1 pb-0.5", tab.width, tab.active && "bg-white")}>
        <div className={clsx("flex min-w-0 flex-1 items-center justify-between border-b-2 pl-1.5", tab.active ? "border-[#009646]" : "border-transparent")}>
          <button type="button" className="text-left text-[13px] leading-5 whitespace-nowrap">{tab.label}</button>
          <button type="button" aria-label={`Закрыть ${tab.label}`} className="flex h-4 w-4 shrink-0 items-center justify-center">
            <svg width="7" height="7" viewBox="0 0 7 7" stroke="#4a4a4a" strokeWidth="1.800"><path d="m.5.500 6 6M6.500.500l-6 6" /></svg>
          </button>
        </div>
      </div>
    ))}
    <button type="button" aria-label="Список вкладок" className="flex flex-1 items-center justify-center">
      <svg width="9" height="5" viewBox="0 0 9 5"><path d="M0 0h9L4.500 5z" fill="#5a5a5a" /></svg>
    </button>
  </div>
);

const Arrow = ({ d, color, label }: { d: string; color: string; label: string }) => (
  <button type="button" aria-label={label} className="flex size-6 shrink-0 items-center justify-center">
    <svg width="6" height="6" viewBox="0 0 6 6"><path d={d} fill={color} /></svg>
  </button>
);

const App = () => (
  <div className="flex h-screen flex-col overflow-hidden border-x border-[#1c1c1c] bg-[#b3b3b6] pr-[5px] pl-[5px] font-['Liberation_Sans',Arial,sans-serif] text-[#333333]">
    <TitleBar />
    <TabBar />
    <div className="flex min-h-0 flex-1 border-b border-[#8f8f8f]">
      <Sidebar />
      <main className="relative flex min-w-0 flex-1 flex-col bg-white">
        <div className="flex h-[43px] shrink-0 items-center pt-1.5 pr-2 pl-3">
          <div className="flex h-[25px] rounded-[3px] border border-b-2 border-[#b4b4b4]">
            <button type="button" aria-label="Назад" className="flex w-9 items-center justify-center border-r border-[#cfcfcf]">
              <svg width="14" height="10" viewBox="0 0 14 10"><path d="M0 5 5.500 0v3.700H14v2.600H5.500V10z" fill="#4a4a4a" /></svg>
            </button>
            <button type="button" aria-label="Вперед" className="flex w-9 items-center justify-center">
              <svg width="14" height="10" viewBox="0 0 14 10"><path d="M14 5 8.500 0v3.700H0v2.600h8.500V10z" fill="#b4b4b4" /></svg>
            </button>
          </div>
          <h1 className="ml-[57px] flex-1 text-lg leading-6 text-black">Таблица</h1>
          <button type="button" aria-label="Закрыть" className="flex size-4 items-center justify-center">
            <svg width="8" height="8" viewBox="0 0 8 8" stroke="#4a4a4a" strokeWidth="1.200"><path d="m.5.500 7 7M7.500.500l-7 7" /></svg>
          </button>
        </div>

        <div className="flex min-h-0 flex-1">
          <div className="min-w-0 flex-1 overflow-hidden border-t border-[#a0a0a0] text-[13px] leading-4">
            <InvoiceHeader />
            <GoodsTable />
            <Signatures />
            <Transfer />
          </div>
          <div className="flex w-[14px] shrink-0 flex-col items-center">
            <Arrow label="Вверх" d="M0 5 3 1l3 4z" color="#b9b9b9" />
            <div className="w-2 flex-1 rounded-full bg-[#d6d6d6]">
              <div className="h-[87%] rounded-full bg-[#999999]" />
            </div>
            <Arrow label="Вниз" d="M0 1h6L3 5z" color="#4a4a4a" />
          </div>
        </div>
        <div className="flex h-[14px] shrink-0 items-center pr-[11px]">
          <Arrow label="Влево" d="M5 0v6L1 3z" color="#b9b9b9" />
          <div className="h-2 flex-1 rounded-full bg-[#d6d6d6]">
            <div className="h-full w-[73%] rounded-full bg-[#999999]" />
          </div>
          <Arrow label="Вправо" d="M1 0v6l4-3z" color="#4a4a4a" />
        </div>

        <div className="pointer-events-none absolute right-[46px] bottom-2 w-[303px] font-['Open_Sans',sans-serif] text-[#8a8a8a]/70">
          <p className="text-[19px] leading-6">Активация Windows</p>
          <p className="text-sm leading-5 whitespace-nowrap">
            Чтобы активировать Windows, перейдите в<br />раздел "Параметры".
          </p>
        </div>
      </main>
    </div>
  </div>
);

export default App;
